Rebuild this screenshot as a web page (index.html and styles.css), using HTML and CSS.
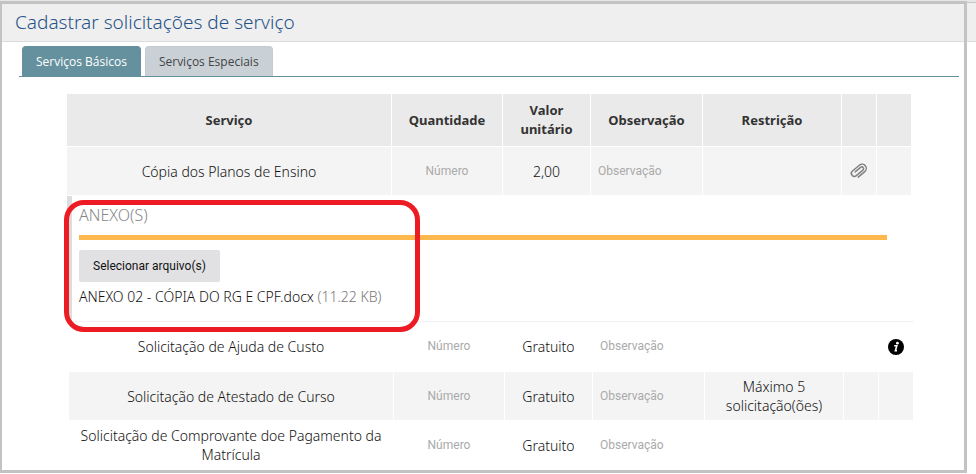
FILE: index.html
```html
<!DOCTYPE html>
<html lang="pt-BR">
<head>
<meta charset="utf-8">
<meta name="viewport" content="width=device-width, initial-scale=1">
<title>Cadastrar solicitações de serviço</title>
<link rel="stylesheet" href="styles.css">
</head>
<body>
<div class="page">
  <header class="page-header">
    <h1>Cadastrar solicitações de serviço</h1>
  </header>
  <main class="content">
    <div class="tabs" role="tablist">
      <button type="button" class="tab active" role="tab" aria-selected="true">Serviços Básicos</button>
      <button type="button" class="tab" role="tab" aria-selected="false">Serviços Especiais</button>
    </div>
    <div class="services">
      <table class="grid">
        <colgroup>
          <col>
          <col class="col-qty">
          <col class="col-value">
          <col class="col-note">
          <col class="col-limit">
          <col class="col-icon">
          <col class="col-icon">
        </colgroup>
        <thead>
          <tr>
            <th>Serviço</th>
            <th>Quantidade</th>
            <th>Valor unitário</th>
            <th>Observação</th>
            <th>Restrição</th>
            <th></th>
            <th></th>
          </tr>
        </thead>
        <tbody>
          <tr class="odd">
            <td>Cópia dos Planos de Ensino</td>
            <td><input class="qty" type="text" placeholder="Número" aria-label="Quantidade"></td>
            <td>2,00</td>
            <td><input class="note" type="text" placeholder="Observação" aria-label="Observação"></td>
            <td></td>
            <td>
              <button type="button" class="icon-button" aria-label="Anexos">
                <svg width="20" height="18" viewBox="0 0 20 18" fill="none" stroke="#808080" stroke-width="1.5" stroke-linecap="round">
                  <g transform="rotate(-40 10 9)">
                    <path d="M5.5 13.2H14a4.2 4.2 0 0 0 0-8.4H5a3 3 0 0 0 0 6h8.6a1.8 1.8 0 0 0 0-3.6H6.5"/>
                  </g>
                </svg>
              </button>
            </td>
            <td></td>
          </tr>
        </tbody>
      </table>

      <section class="attachments">
        <h2>ANEXO(S)</h2>
        <button type="button" class="select-file">Selecionar arquivo(s)</button>
        <p class="file">ANEXO 02 - CÓPIA DO RG E CPF.docx <span class="size">(11.22 KB)</span></p>
        <div class="highlight"></div>
      </section>

      <table class="grid grid-rest">
        <colgroup>
          <col>
          <col class="col-qty">
          <col class="col-value">
          <col class="col-note">
          <col class="col-limit">
          <col class="col-icon">
          <col class="col-icon">
        </colgroup>
        <tbody>
          <tr class="first">
            <td>Solicitação de Ajuda de Custo</td>
            <td><input class="qty" type="text" placeholder="Número" aria-label="Quantidade"></td>
            <td>Gratuito</td>
            <td><input class="note" type="text" placeholder="Observação" aria-label="Observação"></td>
            <td></td>
            <td></td>
            <td>
              <button type="button" class="icon-button" aria-label="Informações">
                <svg width="16" height="16" viewBox="0 0 16 16">
                  <circle cx="8" cy="8" r="8" fill="#000"/>
                  <circle cx="9.4" cy="4.2" r="1.4" fill="#fff"/>
                  <path d="M6.2 6.8h2.6L7.4 11.8h1.6" fill="none" stroke="#fff" stroke-width="1.6"/>
                </svg>
              </button>
            </td>
          </tr>
          <tr class="odd">
            <td>Solicitação de Atestado de Curso</td>
            <td><input class="qty" type="text" placeholder="Número" aria-label="Quantidade"></td>
            <td>Gratuito</td>
            <td><input class="note" type="text" placeholder="Observação" aria-label="Observação"></td>
            <td>Máximo 5 solicitação(ões)</td>
            <td></td>
            <td></td>
          </tr>
          <tr>
            <td>Solicitação de Comprovante doe Pagamento da Matrícula</td>
            <td><input class="qty" type="text" placeholder="Número" aria-label="Quantidade"></td>
            <td>Gratuito</td>
            <td><input class="note" type="text" placeholder="Observação" aria-label="Observação"></td>
            <td></td>
            <td></td>
            <td></td>
          </tr>
        </tbody>
      </table>
    </div>
  </main>
  <div class="frame"></div>
</div>
</body>
</html>
```

FILE: styles.css
```css
* {
  box-sizing: border-box;
}

body {
  margin: 0;
  background: #fff;
  color: #333;
  font-family: "Noto Sans", "Open Sans", sans-serif;
  font-size: 13px;
  line-height: 19px;
}

button, input {
  margin: 0;
  padding: 0;
  border: 0;
  background: none;
  font: inherit;
}

.page {
  position: relative;
  min-height: 100vh;
  padding-top: 2px;
  background: linear-gradient(#e6e6e6 2px, #fff 2px);
}

/* outline drawn over the whole page */
.frame {
  position: absolute;
  top: 1px;
  right: 9px;
  bottom: 1px;
  left: 0;
  border: 3px solid #c3c3c3;
  border-left-width: 2px;
  pointer-events: none;
}

.page-header {
  padding: 7px 15px;
  border-top: 1px solid #c8c8c8;
  border-bottom: 1px solid #dcdcdc;
  background: #efefef;
}

.page-header h1 {
  margin: 0;
  color: #1f5288;
  font-family: "Noto Sans", "Open Sans", sans-serif;
  font-size: 19px;
  font-weight: 300;
  line-height: 24px;
}

.content {
  padding: 4px 17px 0 19px;
}

.tabs {
  display: flex;
  gap: 4px;
  padding: 0 3px;
  border-bottom: 1px solid #65919e;
}

.tab {
  padding: 0 13px;
  border: 1px solid #c5cbd0;
  border-bottom: 0;
  border-radius: 4px 4px 0 0;
  background: #c9d1d7;
  color: #444;
  font-family: "Open Sans", "Noto Sans", sans-serif;
  font-size: 12px;
  line-height: 29px;
}

.tab.active {
  border-color: #65919e;
  background: #65919e;
  color: #fff;
}

.services {
  padding: 17px 47px 0 48px;
}

.grid {
  width: 100%;
  border-spacing: 0;
  table-layout: fixed;
}

.grid-rest {
  position: relative;
  left: 2px;
}

.col-qty { width: 111px; }
.col-value { width: 88px; }
.col-note { width: 112px; }
.col-limit { width: 139px; }
.col-icon { width: 35px; }

.grid th, .grid td {
  height: 49px;
  padding: 0 7px;
  border-right: 1px solid #fff;
  border-bottom: 1px solid #fff;
  text-align: center;
}

.grid th {
  height: 53px;
  background: #eaeaea;
}

.grid td {
  color: #111;
  font-size: 14px;
  font-weight: 300;
}

.grid td:first-child {
  padding: 0 10px;
}

.odd td {
  background: #f4f4f4;
}

.grid .first td {
  height: 51px;
  border-top: 1px solid #f2f2f2;
}

.qty, .note {
  display: block;
  width: 100%;
  font-family: Roboto, sans-serif;
  font-size: 12px;
  font-weight: 400;
}

.qty {
  text-align: center;
}

.qty::placeholder, .note::placeholder {
  color: #aaa;
  opacity: 1;
}

.grid .icon-button {
  display: block;
  margin: 0 auto;
}

.icon-button svg {
  display: block;
}

.grid td:nth-child(n+6) {
  padding: 0;
}

.attachments {
  position: relative;
  height: 125px;
  padding: 8px 25px 0 7px;
  border-left: 5px solid #ddd;
}

.attachments h2 {
  margin: 0 0 10px;
  padding-bottom: 8px;
  border-bottom: 5px solid #ffb84d;
  color: #888;
  font-size: 16px;
  font-weight: 300;
  line-height: 23px;
}

.select-file {
  padding: 0 14px;
  border-radius: 2px;
  background: #e1e1e4;
  color: #111;
  font-family: Roboto, sans-serif;
  font-size: 12px;
  line-height: 32px;
}

.file {
  margin: 5px 0 0;
  color: #111;
  font-size: 14px;
  font-weight: 300;
}

.size {
  color: #777;
}

/* marks the upload area */
.highlight {
  position: absolute;
  top: 4px;
  left: -8px;
  width: 356px;
  height: 132px;
  border: 5px solid #ed1c24;
  border-radius: 20px;
  pointer-events: none;
  z-index: 1;
}
```
